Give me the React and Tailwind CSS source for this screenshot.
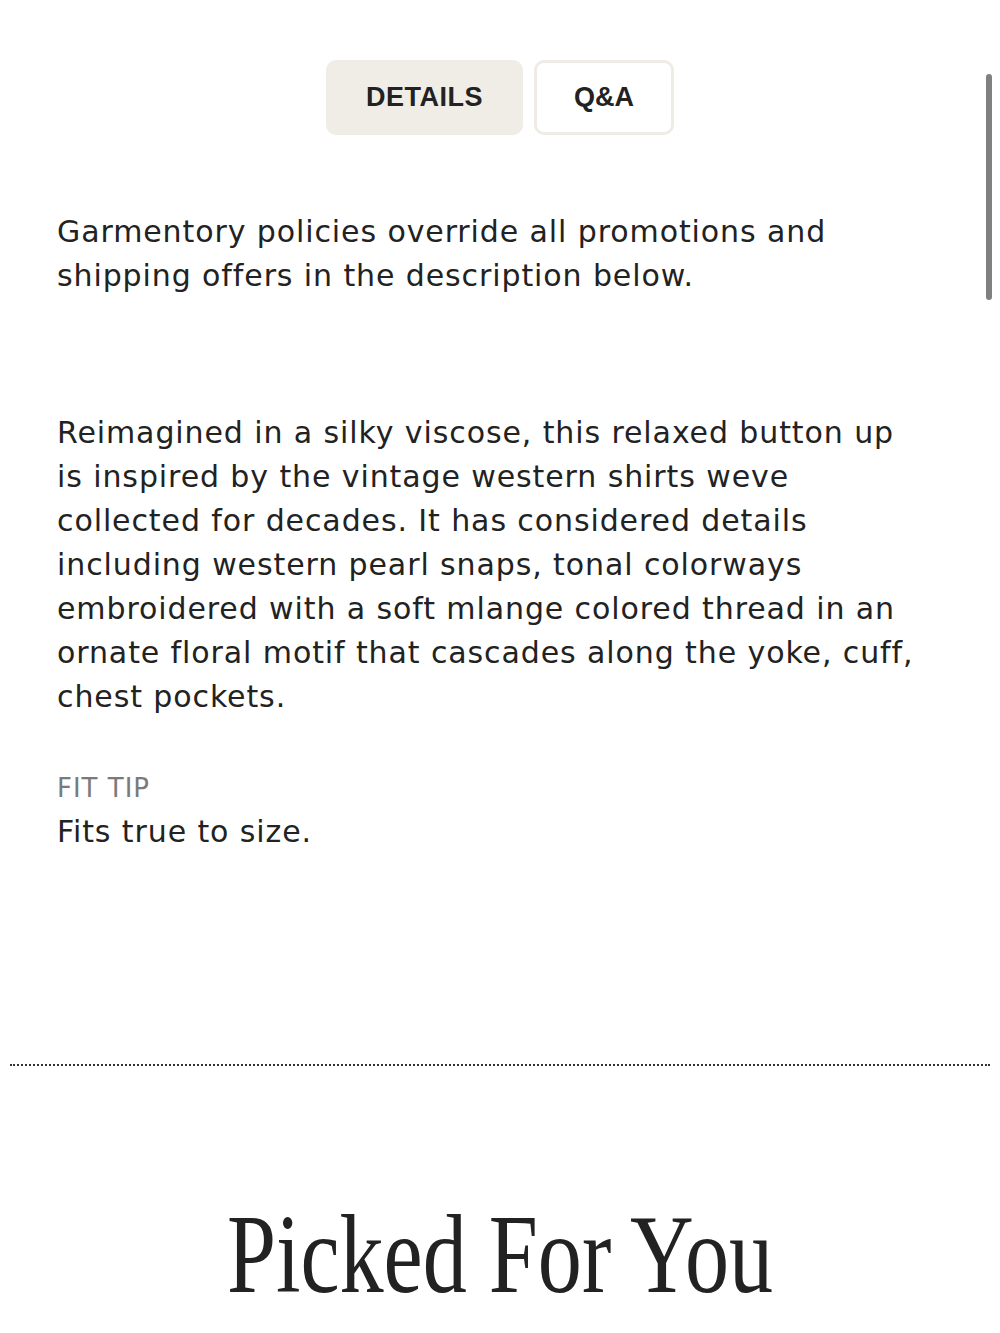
import React from "react";

const sans = { fontFamily: '"Liberation Sans", Arial, sans-serif' };
const body = { fontFamily: '"DejaVu Sans", Verdana, sans-serif' };

export default function App() {
  return (
    <div className="relative min-h-[1333px] w-full overflow-hidden bg-white text-[#222]" style={sans}>
      {/* scroll indicator */}
      <div className="absolute right-[8px] top-[74px] h-[226px] w-[6px] rounded-full bg-[#808080]" />

      <div className="flex justify-center gap-[11px] pt-[60px]">
        <button className="h-[75px] w-[197px] rounded-[10px] bg-[#f0ede7] text-[27px] font-bold tracking-[0.5px] text-[#222]">
          DETAILS
        </button>
        <button className="h-[75px] w-[140px] rounded-[10px] border-[3px] border-[#efece6] bg-white text-[27px] font-bold text-[#222]">
          Q&amp;A
        </button>
      </div>

      <div className="px-[57px] text-[30px] leading-[44px] tracking-[0.9px]" style={body}>
        <p className="mt-[75px] whitespace-nowrap">
          Garmentory policies override all promotions and
          <br />
          shipping offers in the description below.
        </p>

        <p className="mt-[113px] whitespace-nowrap">
          Reimagined in a silky viscose, this relaxed button up
          <br />
          is inspired by the vintage western shirts weve
          <br />
          collected for decades. It has considered details
          <br />
          including western pearl snaps, tonal colorways
          <br />
          embroidered with a soft mlange colored thread in an
          <br />
          ornate floral motif that cascades along the yoke, cuff,
          <br />
          chest pockets.
        </p>

        <p className="mt-[51px] text-[26px] leading-[36px] tracking-[1px] text-[#7a7a7a]">FIT TIP</p>
        <p className="mt-[4px]">Fits true to size.</p>
      </div>

      <div className="mx-[10px] mt-[210px] border-t-2 border-dotted border-[#333]" />

      <div className="mt-[132px] flex justify-center">
        <h2
          className="inline-block scale-x-[0.787] text-[112px] leading-[112px] text-[#222]"
          style={{ fontFamily: '"Liberation Serif", "Times New Roman", serif' }}
        >
          Picked For You
        </h2>
      </div>
    </div>
  );
}
